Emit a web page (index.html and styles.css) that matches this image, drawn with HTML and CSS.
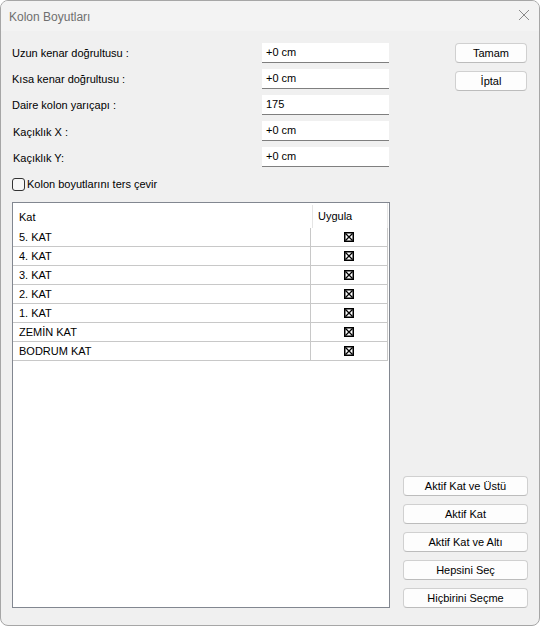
FILE: index.html
```html
<!DOCTYPE html>
<html lang="tr">
<head>
<meta charset="utf-8">
<title>Kolon Boyutları</title>
<link rel="stylesheet" href="styles.css">
</head>
<body>
<div class="window">
  <div class="titlebar">
    <span class="title">Kolon Boyutları</span>
    <svg class="close" width="12" height="12" viewBox="0 0 12 12"><path d="M1 1 L11 11 M11 1 L1 11" stroke="#8a8a8a" stroke-width="1" fill="none"/></svg>
  </div>
  <div class="content">
    <div class="left">
      <div class="form">
        <div class="row"><span class="label">Uzun kenar doğrultusu :</span><div class="input">+0 cm</div></div>
        <div class="row"><span class="label">Kısa kenar doğrultusu :</span><div class="input">+0 cm</div></div>
        <div class="row"><span class="label">Daire kolon yarıçapı :</span><div class="input">175</div></div>
        <div class="row"><span class="label shift">Kaçıklık X :</span><div class="input">+0 cm</div></div>
        <div class="row"><span class="label shift">Kaçıklık Y:</span><div class="input">+0 cm</div></div>
      </div>
      <div class="check-row"><span class="checkbox"></span><span class="check-label">Kolon boyutlarını ters çevir</span></div>
      <div class="table">
        <div class="thead">
          <div class="th th-kat">Kat</div>
          <div class="th th-uy">Uygula</div>
        </div>
        <div class="tr"><div class="td td-kat">5. KAT</div><div class="td td-uy"><svg class="xbox" width="10" height="10" viewBox="0 0 10 10"><rect x="0.75" y="0.75" width="8.5" height="8.5" fill="none" stroke="#000" stroke-width="1.5"/><path d="M1.5 1.5 L8.5 8.5 M8.5 1.5 L1.5 8.5" stroke="#000" stroke-width="1.3"/></svg></div></div>
        <div class="tr"><div class="td td-kat">4. KAT</div><div class="td td-uy"><svg class="xbox" width="10" height="10" viewBox="0 0 10 10"><rect x="0.75" y="0.75" width="8.5" height="8.5" fill="none" stroke="#000" stroke-width="1.5"/><path d="M1.5 1.5 L8.5 8.5 M8.5 1.5 L1.5 8.5" stroke="#000" stroke-width="1.3"/></svg></div></div>
        <div class="tr"><div class="td td-kat">3. KAT</div><div class="td td-uy"><svg class="xbox" width="10" height="10" viewBox="0 0 10 10"><rect x="0.75" y="0.75" width="8.5" height="8.5" fill="none" stroke="#000" stroke-width="1.5"/><path d="M1.5 1.5 L8.5 8.5 M8.5 1.5 L1.5 8.5" stroke="#000" stroke-width="1.3"/></svg></div></div>
        <div class="tr"><div class="td td-kat">2. KAT</div><div class="td td-uy"><svg class="xbox" width="10" height="10" viewBox="0 0 10 10"><rect x="0.75" y="0.75" width="8.5" height="8.5" fill="none" stroke="#000" stroke-width="1.5"/><path d="M1.5 1.5 L8.5 8.5 M8.5 1.5 L1.5 8.5" stroke="#000" stroke-width="1.3"/></svg></div></div>
        <div class="tr"><div class="td td-kat">1. KAT</div><div class="td td-uy"><svg class="xbox" width="10" height="10" viewBox="0 0 10 10"><rect x="0.75" y="0.75" width="8.5" height="8.5" fill="none" stroke="#000" stroke-width="1.5"/><path d="M1.5 1.5 L8.5 8.5 M8.5 1.5 L1.5 8.5" stroke="#000" stroke-width="1.3"/></svg></div></div>
        <div class="tr"><div class="td td-kat">ZEMİN KAT</div><div class="td td-uy"><svg class="xbox" width="10" height="10" viewBox="0 0 10 10"><rect x="0.75" y="0.75" width="8.5" height="8.5" fill="none" stroke="#000" stroke-width="1.5"/><path d="M1.5 1.5 L8.5 8.5 M8.5 1.5 L1.5 8.5" stroke="#000" stroke-width="1.3"/></svg></div></div>
        <div class="tr"><div class="td td-kat">BODRUM KAT</div><div class="td td-uy"><svg class="xbox" width="10" height="10" viewBox="0 0 10 10"><rect x="0.75" y="0.75" width="8.5" height="8.5" fill="none" stroke="#000" stroke-width="1.5"/><path d="M1.5 1.5 L8.5 8.5 M8.5 1.5 L1.5 8.5" stroke="#000" stroke-width="1.3"/></svg></div></div>
      </div>
    </div>
    <div class="right">
      <div class="top-buttons">
        <div class="btn small">Tamam</div>
        <div class="btn small">İptal</div>
      </div>
      <div class="bottom-buttons">
        <div class="btn wide">Aktif Kat ve Üstü</div>
        <div class="btn wide">Aktif Kat</div>
        <div class="btn wide">Aktif Kat ve Altı</div>
        <div class="btn wide">Hepsini Seç</div>
        <div class="btn wide">Hiçbirini Seçme</div>
      </div>
    </div>
  </div>
</div>
</body>
</html>
```

FILE: styles.css
```css
html, body {
  margin: 0;
  padding: 0;
  background: #ffffff;
}
body {
  font-family: "Liberation Sans", Arial, sans-serif;
  font-size: 11px;
  color: #000;
}
.window {
  width: 540px;
  height: 626px;
  box-sizing: border-box;
  border: 1px solid #a6a6a6;
  border-radius: 8px;
  background: #f0f0f0;
  overflow: hidden;
  display: flex;
  flex-direction: column;
}
.titlebar {
  height: 30px;
  flex: none;
  background: #f3f3f3;
  display: flex;
  align-items: center;
  justify-content: space-between;
  padding: 0 9px 0 8px;
}
.title {
  font-size: 12px;
  color: #6f6f6f;
  margin-top: 1px;
}
.close {
  margin-top: -3px;
}
.content {
  flex: 1;
  display: flex;
  padding: 12px 0 0 11px;
}
.left {
  width: 378px;
  display: flex;
  flex-direction: column;
}
.form {
  display: flex;
  flex-direction: column;
  gap: 6px;
}
.row {
  height: 20px;
  display: flex;
  align-items: center;
}
.label {
  width: 250px;
}
.label.shift {
  margin-top: 2px;
  padding-left: 1px;
  width: 249px;
}
.input {
  width: 127px;
  height: 20px;
  box-sizing: border-box;
  background: #fff;
  border-bottom: 1px solid #7f7f7f;
  padding-left: 4px;
  line-height: 19px;
}
.check-row {
  margin-top: 10px;
  height: 14px;
  display: flex;
  align-items: center;
}
.checkbox {
  width: 11px;
  height: 11px;
  border: 1px solid #333;
  border-radius: 3px;
  background: #f7f7f7;
  margin-right: 2px;
}
.table {
  margin-top: 11px;
  height: 406px;
  box-sizing: border-box;
  border: 1px solid #828790;
  background: #fff;
}
.thead {
  height: 25px;
  display: flex;
}
.th {
  display: flex;
  align-items: center;
  padding-left: 6px;
  box-sizing: border-box;
}
.th-kat {
  width: 300px;
  border-right: 1px solid #e5e5e5;
  margin-top: 2px;
}
.th-uy {
  width: 75px;
  border-right: 1px solid #e5e5e5;
  padding-left: 5px;
}
.tr {
  width: 374px;
  height: 18px;
  display: flex;
  border-bottom: 1px solid #c8c8c8;
  border-right: 1px solid #c8c8c8;
}
.td {
  display: flex;
  align-items: center;
  box-sizing: border-box;
}
.td-kat {
  width: 298px;
  padding-left: 6px;
  border-right: 1px solid #c8c8c8;
}
.td-uy {
  flex: 1;
  justify-content: center;
}
.xbox {
  display: block;
}
.right {
  flex: 1;
  display: flex;
  flex-direction: column;
  justify-content: space-between;
  padding-bottom: 17px;
}
.top-buttons {
  display: flex;
  flex-direction: column;
  gap: 8px;
  padding-left: 65px;
}
.bottom-buttons {
  display: flex;
  flex-direction: column;
  gap: 8px;
  padding-left: 13px;
}
.btn {
  height: 20px;
  box-sizing: border-box;
  background: #fdfdfd;
  border: 1px solid #d0d0d0;
  border-bottom-color: #bcbcbc;
  border-radius: 4px;
  display: flex;
  align-items: center;
  justify-content: center;
}
.btn.small {
  width: 72px;
}
.btn.wide {
  width: 125px;
}
```
